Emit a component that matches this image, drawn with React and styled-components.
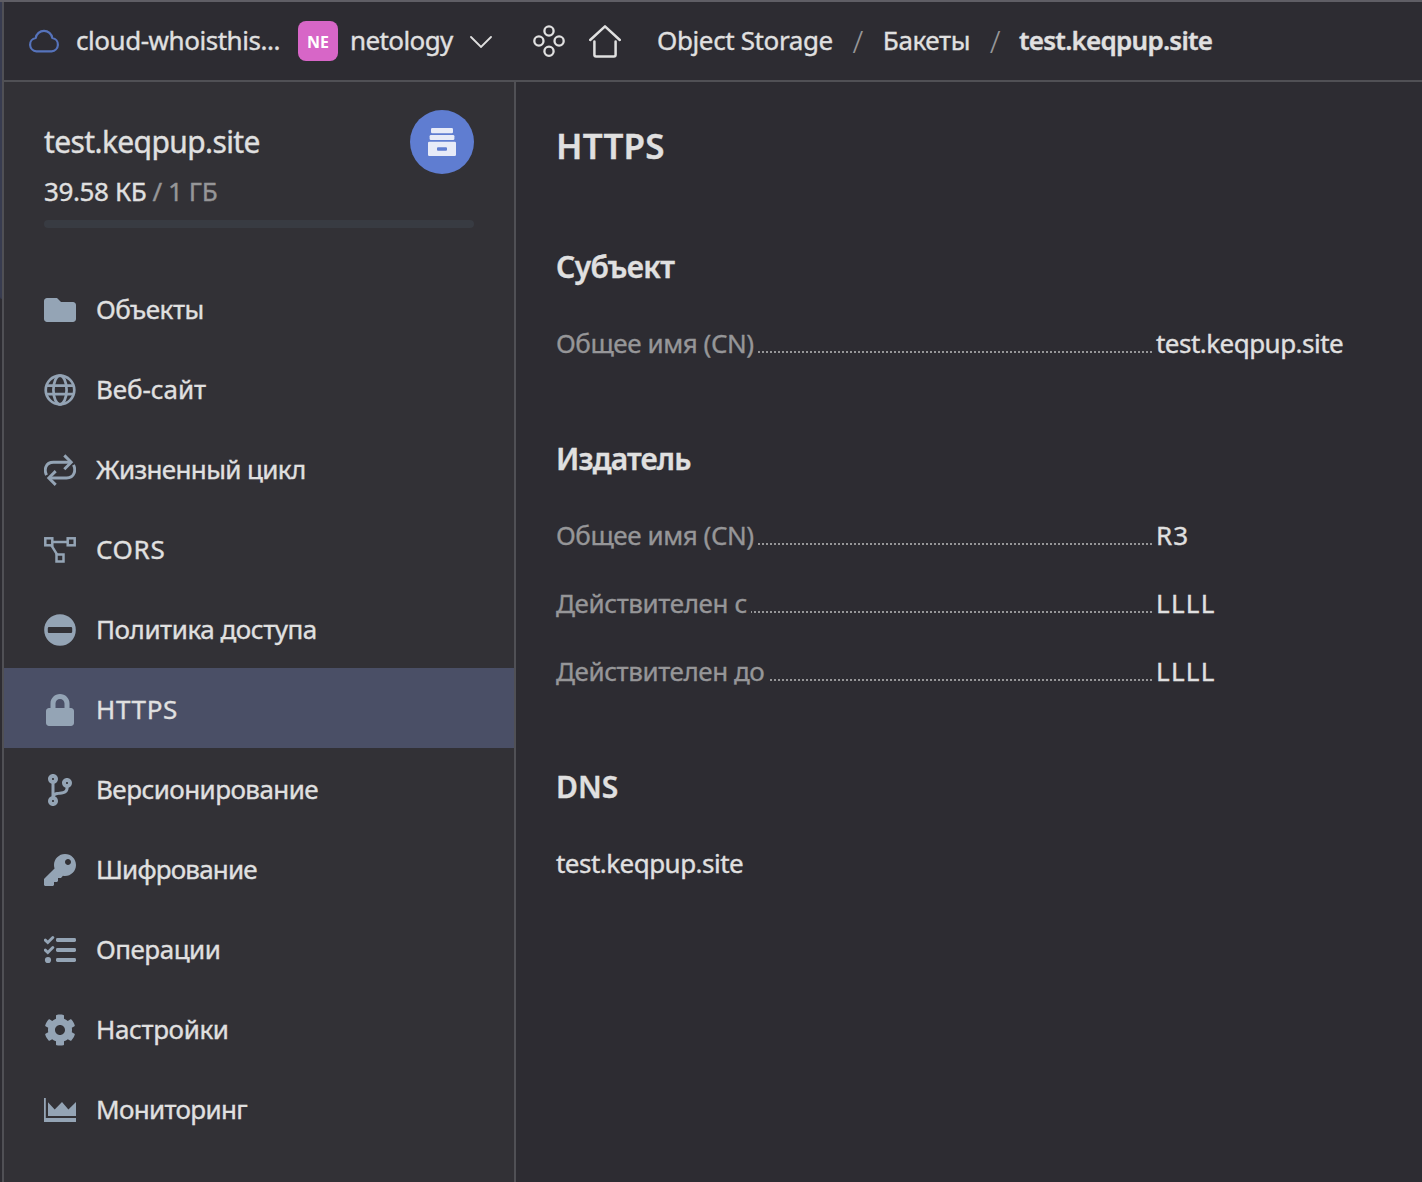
import React from "react";
import styled, { createGlobalStyle, css } from "styled-components";
import { FaFolder, FaLock, FaCodeBranch, FaKey, FaCog } from "react-icons/fa";

const color = {
  base: "#2d2c32",
  panel: "#323136",
  line: "#505055",
  topEdge: "#5f5e65",
  strip: "#383c50",
  active: "#4a4f66",
  text: "#e0e0e0",
  muted: "#969698",
  icon: "#94a4b5",
};

const GlobalStyle = createGlobalStyle`
  * { box-sizing: border-box; }
  body {
    margin: 0;
    background: ${color.base};
    color: ${color.text};
    font: 400 26px/36px "Noto Sans", "Open Sans", sans-serif;
  }
  h1, h2, dl, dt, dd, ul, p { margin: 0; padding: 0; }
  svg { display: block; }
`;

const Page = styled.div`
  display: grid;
  grid-template-columns: 2px 1fr;
  width: 1422px;
  height: 1182px;
  border-top: 2px solid ${color.topEdge};
  overflow: hidden;
`;

const EdgeStrip = styled.div`
  height: 297px;
  background: ${color.strip};
  border-bottom-left-radius: 2px;
`;

const Window = styled.div`
  display: grid;
  grid-template-rows: 80px 1fr;
  border-left: 2px solid ${color.line};
`;

const Header = styled.header`
  display: flex;
  align-items: center;
  padding-left: 24px;
  border-bottom: 2px solid ${color.line};
`;

const Text = styled.span`
  white-space: nowrap;
  letter-spacing: ${(p) => p.$spacing || 0}px;
  -webkit-text-stroke: 0.35px currentColor;
`;

const HeaderText = styled(Text)`
  padding-bottom: 2px;
`;

const CloudName = styled(HeaderText)`
  width: 222px;
  margin-left: 16px;
`;

const Badge = styled.span`
  display: flex;
  align-items: center;
  justify-content: center;
  width: 40px;
  height: 40px;
  padding-top: 2px;
  margin-right: 12px;
  border-radius: 8px;
  background: #d766c7;
  color: #fff;
  font-size: 16px;
  font-weight: 700;
  line-height: 20px;
`;

const FolderName = styled(HeaderText)`
  width: 120px;
`;

const HeaderIcons = styled.div`
  display: flex;
  gap: 24px;
  margin: 0 36px 0 41px;
`;

const Crumbs = styled.nav`
  display: flex;
  align-items: center;
`;

const Separator = styled.span`
  width: 50px;
  color: ${color.muted};
  font-size: 31px;
  font-weight: 300;
  line-height: 36px;
  text-align: center;
`;

const CurrentCrumb = styled(HeaderText)`
  margin-left: -1px;
  font-weight: 600;
`;

const Body = styled.div`
  display: grid;
  grid-template-columns: 512px 1fr;
`;

const Sidebar = styled.aside`
  background: ${color.panel};
  border-right: 2px solid ${color.line};
`;

const Bucket = styled.section`
  height: 186px;
  padding: 28px 40px 0;
`;

const BucketTop = styled.div`
  display: flex;
  align-items: center;
  justify-content: space-between;
`;

const BucketName = styled(Text)`
  padding-bottom: 1px;
  font-size: 30px;
  line-height: 40px;
`;

const BucketIcon = styled.div`
  width: 64px;
  height: 64px;
  border-radius: 50%;
  background: #5f7dd1;
`;

const Usage = styled.p`
  display: flex;
  height: 36px;
  margin: -1px 0 11px;
`;

const Quota = styled(Text)`
  margin-left: 6px;
  color: ${color.muted};
`;

const Meter = styled.div`
  height: 8px;
  border-radius: 4px;
  background: #383b42;
`;

const NavItem = styled.a`
  display: flex;
  align-items: center;
  gap: 20px;
  height: 80px;
  padding: 4px 40px 0;
  ${(p) => p.$active && css`background: ${color.active};`}
`;

const NavIcon = styled.span`
  display: flex;
  justify-content: center;
  width: 32px;
  color: ${color.icon};
`;

const NavLabel = styled(Text)`
  padding-bottom: 2px;
`;

const Main = styled.main`
  padding: 42px 40px 0;
`;

const Title = styled.h1`
  font-size: 35px;
  font-weight: 600;
  line-height: 44px;
`;

const Section = styled.section`
  margin-top: ${(p) => (p.$first ? 81 : 80)}px;
`;

const SectionTitle = styled.h2`
  margin-bottom: 40px;
  font-size: 30px;
  font-weight: 600;
  line-height: 36px;
`;

const Fields = styled.dl`
  display: grid;
  gap: 32px;
`;

const Field = styled.div`
  display: grid;
  grid-template-columns: 600px 1fr;
`;

const Term = styled.dt`
  display: flex;
  align-items: flex-end;
  color: ${color.muted};
`;

const Leader = styled.span`
  flex: 1;
  height: 2px;
  margin: 0 4px 8px;
  background: repeating-linear-gradient(to left, ${color.muted} 0 2px, transparent 2px 4px);
`;

const CloudIcon = () => (
  <svg width="32" height="24" viewBox="28 29 32 24" fill="none" stroke="#5673bb" strokeWidth="2.2">
    <path d="M36.4 51.3a6.7 6.7 0 0 1-.7-13.3a8.4 8.4 0 0 1 16.6 0a6.7 6.7 0 0 1-.7 13.3z" strokeLinejoin="round" />
  </svg>
);

const ChevronIcon = () => (
  <svg width="22" height="14" viewBox="0 0 22 14" fill="none" stroke={color.text} strokeWidth="1.8" strokeLinecap="round">
    <path d="M1 3l10 10L21 3" />
  </svg>
);

const ServicesIcon = () => (
  <svg width="32" height="34" viewBox="0 -1 32 34" fill="none" stroke={color.text} strokeWidth="2.3">
    <circle cx="16" cy="6" r="4.6" />
    <circle cx="5.900" cy="16" r="4.6" />
    <circle cx="26.1" cy="16" r="4.6" />
    <circle cx="16" cy="26.2" r="4.6" />
  </svg>
);

const HomeIcon = () => (
  <svg width="32" height="34" viewBox="0 0 32 34" fill="none" stroke={color.text} strokeWidth="2.5" strokeLinecap="round" strokeLinejoin="round">
    <path d="M1.200 16L16 2.300L30.800 16" />
    <path d="M5.400 17.500V30.700a1.700 1.700 0 0 0 1.700 1.700h17.800a1.700 1.700 0 0 0 1.700-1.700V17.500" />
  </svg>
);

const DrawerIcon = () => (
  <svg width="64" height="64" viewBox="0 0 64 64" fill="#e7ebf8">
    <rect x="21" y="18" width="22" height="5.300" rx="1.300" />
    <rect x="19.600" y="25" width="24.800" height="5" rx="1.300" />
    <path fillRule="evenodd" d="M19.300 31.800h25.400a1.300 1.300 0 0 1 1.300 1.300v11.600a1.300 1.300 0 0 1-1.300 1.300h-25.400a1.300 1.300 0 0 1-1.300-1.300v-11.600a1.300 1.300 0 0 1 1.300-1.300zM28 37.300a1 1 0 0 0-1 1v1.400a1 1 0 0 0 1 1h8a1 1 0 0 0 1-1v-1.400a1 1 0 0 0-1-1z" />
  </svg>
);

const GlobeIcon = () => (
  <svg width="32" height="32" viewBox="0 0 32 32" fill="none" stroke="currentColor" strokeWidth="2.700">
    <circle cx="16" cy="16" r="14.300" />
    <ellipse cx="16" cy="16" rx="6.600" ry="14.300" />
    <path d="M2 11.600h28M2 20.200h28" />
  </svg>
);

const CycleIcon = () => (
  <svg width="32" height="32" viewBox="0 0 32 32" fill="none" stroke="currentColor" strokeWidth="2.900">
    <path d="M2.500 21.200C0 16 1.200 8.300 9.500 8.300H27" />
    <path d="M20.300 1.400L27.200 8.300L20.300 15.200" />
    <path d="M29.500 10.800C32 16 30.800 24 22.500 24H5" />
    <path d="M11.700 17.100L4.800 24L11.700 30.900" />
  </svg>
);

const NodesIcon = () => (
  <svg width="32" height="32" viewBox="0 0 32 32" fill="none" stroke="currentColor" strokeWidth="2.500">
    <rect x="1.300" y="4.300" width="7" height="7" />
    <rect x="23.700" y="4.300" width="7" height="7" />
    <rect x="12.500" y="20.500" width="7" height="7" />
    <path d="M8.300 7.900h15.400M7.400 11.400l5.900 9.400" />
  </svg>
);

const PolicyIcon = () => (
  <svg width="32" height="32" viewBox="0 0 32 32" fill="currentColor">
    <path fillRule="evenodd" d="M16 .2a15.800 15.800 0 1 0 0 31.600a15.800 15.800 0 1 0 0-31.600zM5 13h22a1.200 1.200 0 0 1 1.200 1.200v3.600a1.200 1.200 0 0 1-1.200 1.200H5a1.200 1.200 0 0 1-1.200-1.200v-3.600a1.200 1.200 0 0 1 1.200-1.200z" />
  </svg>
);

const TasksIcon = () => (
  <svg width="32" height="32" viewBox="0 0 32 32" fill="currentColor">
    <rect x="12" y="4" width="20" height="4" rx="1.400" />
    <rect x="12" y="14" width="20" height="4" rx="1.400" />
    <rect x="12" y="24" width="20" height="4" rx="1.400" />
    <circle cx="4" cy="26" r="3.100" />
    <path d="M1.300 6.100l2.500 2.400L8.800 3.500M1.300 16.100l2.500 2.400l5-5" fill="none" stroke="currentColor" strokeWidth="2.900" strokeLinecap="round" />
  </svg>
);

const ChartIcon = () => (
  <svg width="32" height="32" viewBox="0 0 32 32" fill="currentColor">
    <path d="M0 4h1.800v20H32v4H0z" />
    <path d="M4 8.200l6.700 7.200L18 8l6.400 7.400L32 8v14H4z" />
  </svg>
);

const NAV = [
  { label: "Объекты", icon: <FaFolder size={32} />, spacing: -0.5 },
  { label: "Веб-сайт", icon: <GlobeIcon />, spacing: -0.08 },
  { label: "Жизненный цикл", icon: <CycleIcon />, spacing: -0.63 },
  { label: "CORS", icon: <NodesIcon />, spacing: 0.7 },
  { label: "Политика доступа", icon: <PolicyIcon />, spacing: -0.46 },
  { label: "HTTPS", icon: <FaLock size={32} />, spacing: 0.65, active: true },
  { label: "Версионирование", icon: <FaCodeBranch size={32} />, spacing: -0.55 },
  { label: "Шифрование", icon: <FaKey size={32} />, spacing: -0.83 },
  { label: "Операции", icon: <TasksIcon />, spacing: -0.5 },
  { label: "Настройки", icon: <FaCog size={32} />, spacing: -0.38 },
  { label: "Мониторинг", icon: <ChartIcon />, spacing: -0.68 },
];

const SECTIONS = [
  {
    title: "Субъект",
    titleSpacing: -0.65,
    fields: [{ name: "Общее имя (CN)", nameSpacing: -0.43, value: "test.keqpup.site", spacing: -0.53 }],
  },
  {
    title: "Издатель",
    titleSpacing: -0.85,
    fields: [
      { name: "Общее имя (CN)", nameSpacing: -0.43, value: "R3", spacing: 1 },
      { name: "Действителен с", nameSpacing: -0.4, value: "LLLL", spacing: 1.3 },
      { name: "Действителен до", nameSpacing: -0.43, value: "LLLL", spacing: 1.3 },
    ],
  },
];

export default function App() {
  return (
    <>
      <GlobalStyle />
      <Page>
        <EdgeStrip />
        <Window>
          <Header>
            <CloudIcon />
            <CloudName $spacing={-0.46}>cloud-whoisthis...</CloudName>
            <Badge>NE</Badge>
            <FolderName $spacing={-0.6}>netology</FolderName>
            <ChevronIcon />
            <HeaderIcons>
              <ServicesIcon />
              <HomeIcon />
            </HeaderIcons>
            <Crumbs>
              <HeaderText $spacing={-0.38}>Object Storage</HeaderText>
              <Separator>/</Separator>
              <HeaderText $spacing={-0.4}>Бакеты</HeaderText>
              <Separator>/</Separator>
              <CurrentCrumb $spacing={-0.76}>test.keqpup.site</CurrentCrumb>
            </Crumbs>
          </Header>
          <Body>
            <Sidebar>
              <Bucket>
                <BucketTop>
                  <BucketName $spacing={-0.62}>test.keqpup.site</BucketName>
                  <BucketIcon>
                    <DrawerIcon />
                  </BucketIcon>
                </BucketTop>
                <Usage>
                  <Text $spacing={-0.38}>39.58 КБ</Text>
                  <Quota $spacing={-0.4}>/ 1 ГБ</Quota>
                </Usage>
                <Meter />
              </Bucket>
              <nav>
                {NAV.map((item) => (
                  <NavItem key={item.label} $active={item.active}>
                    <NavIcon>{item.icon}</NavIcon>
                    <NavLabel $spacing={item.spacing}>{item.label}</NavLabel>
                  </NavItem>
                ))}
              </nav>
            </Sidebar>
            <Main>
              <Title>
                <Text $spacing={0.2}>HTTPS</Text>
              </Title>
              {SECTIONS.map((section, i) => (
                <Section key={section.title} $first={i === 0}>
                  <SectionTitle>
                    <Text $spacing={section.titleSpacing}>{section.title}</Text>
                  </SectionTitle>
                  <Fields>
                    {section.fields.map((field) => (
                      <Field key={field.name}>
                        <Term>
                          <Text $spacing={field.nameSpacing}>{field.name}</Text>
                          <Leader />
                        </Term>
                        <dd>
                          <Text $spacing={field.spacing}>{field.value}</Text>
                        </dd>
                      </Field>
                    ))}
                  </Fields>
                </Section>
              ))}
              <Section>
                <SectionTitle>
                  <Text $spacing={0}>DNS</Text>
                </SectionTitle>
                <Text $spacing={-0.53}>test.keqpup.site</Text>
              </Section>
            </Main>
          </Body>
        </Window>
      </Page>
    </>
  );
}
